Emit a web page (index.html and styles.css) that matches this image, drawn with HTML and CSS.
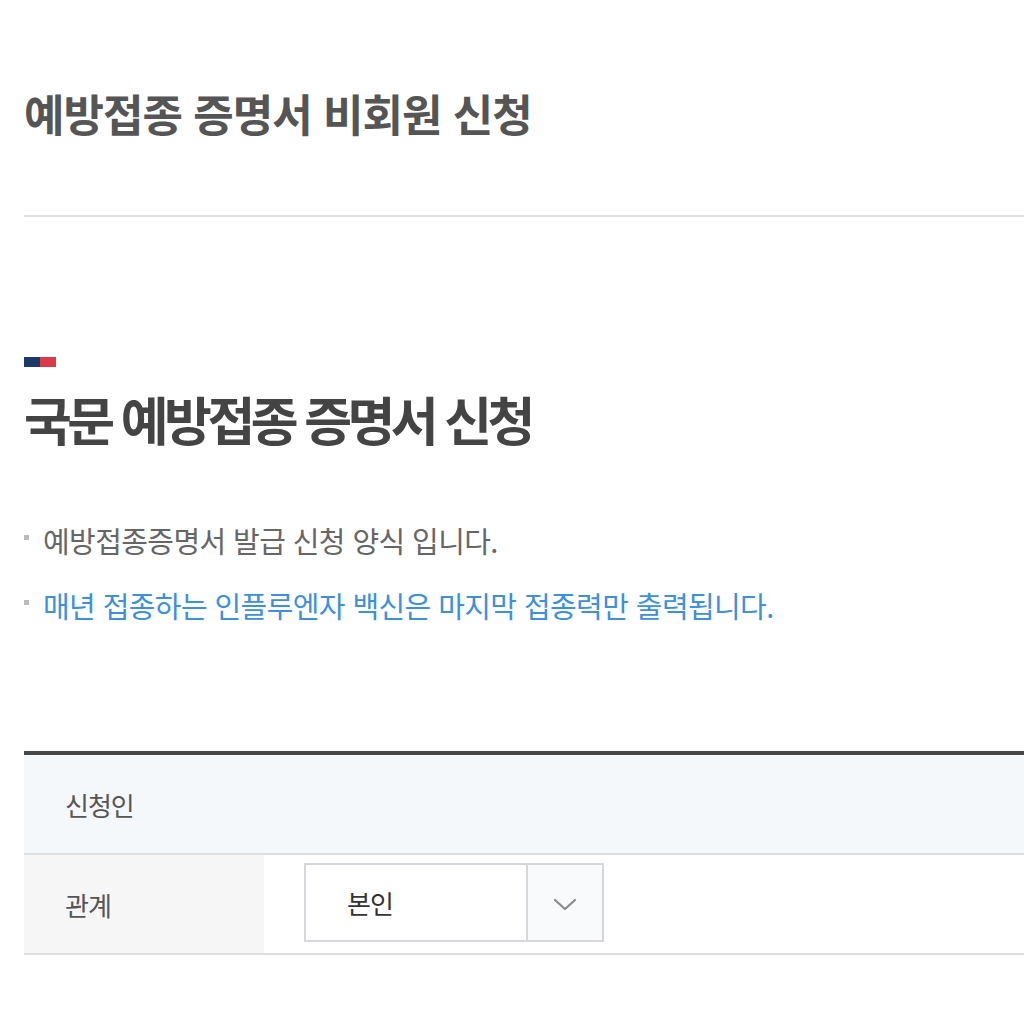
FILE: index.html
```html
<!DOCTYPE html>
<html lang="ko">
<head>
<meta charset="utf-8">
<title>예방접종 증명서 비회원 신청</title>
<link rel="stylesheet" href="styles.css">
</head>
<body>
<div class="page">
  <header class="page-head">
    <h1 class="page-title">예방접종 증명서 비회원 신청</h1>
  </header>
  <section class="section">
    <span class="marker"><span class="marker-blue"></span><span class="marker-red"></span></span>
    <h2 class="section-title">국문 예방접종 증명서 신청</h2>
    <ul class="notes">
      <li class="note">예방접종증명서 발급 신청 양식 입니다.</li>
      <li class="note note-blue">매년 접종하는 인플루엔자 백신은 마지막 접종력만 출력됩니다.</li>
    </ul>
    <div class="form-table">
      <div class="form-head">신청인</div>
      <div class="form-row">
        <div class="form-label">관계</div>
        <div class="form-value">
          <div class="select">
            <span class="select-text">본인</span>
            <span class="select-btn">
              <svg width="24" height="14" viewBox="0 0 24 14" aria-hidden="true"><path d="M2 2 L12 11 L22 2" fill="none" stroke="#8a8a8e" stroke-width="2.2" stroke-linecap="round" stroke-linejoin="round"/></svg>
            </span>
          </div>
        </div>
      </div>
    </div>
  </section>
</div>
</body>
</html>
```

FILE: styles.css
```css
html, body {
  margin: 0;
  padding: 0;
  background: #ffffff;
}
body {
  font-family: "Noto Sans CJK KR", "Noto Sans", sans-serif;
  color: #555;
  overflow: hidden;
}
.page {
  padding-left: 24px;
}
.page-head {
  padding-top: 83px;
  padding-bottom: 72px;
  border-bottom: 2px solid #dddddd;
}
.page-title {
  margin: 0;
  font-size: 44px;
  line-height: 60px;
  font-weight: 700;
  letter-spacing: -1px;
  color: #555555;
  white-space: nowrap;
}
.section {
  padding-top: 140px;
}
.marker {
  display: flex;
  width: 32px;
  height: 10px;
}
.marker-blue {
  flex: 1;
  background: #1b3a68;
}
.marker-red {
  flex: 1;
  background: #d83a48;
}
.section-title {
  margin: 20px 0 0;
  font-size: 52px;
  line-height: 64px;
  font-weight: 700;
  letter-spacing: -4.5px;
  color: #444444;
  white-space: nowrap;
}
.notes {
  list-style: none;
  margin: 69px 0 0;
  padding: 0;
}
.note {
  display: flex;
  align-items: center;
  gap: 14px;
  font-size: 29px;
  line-height: 40px;
  letter-spacing: -0.6px;
  color: #666666;
  white-space: nowrap;
}
.note + .note {
  margin-top: 25px;
}
.note::before {
  content: "";
  width: 5px;
  height: 5px;
  background: #bbbbbb;
  flex: none;
  margin-top: -5px;
}
.note-blue {
  color: #3d90dc;
}
.form-table {
  margin-top: 126px;
  border-top: 4px solid #484848;
}
.form-head {
  height: 98px;
  display: flex;
  align-items: center;
  padding-left: 41px;
  background: #f5f8fb;
  border-bottom: 2px solid #dedede;
  font-size: 26px;
  letter-spacing: -1px;
  color: #555555;
}
.form-row {
  display: flex;
  height: 98px;
  border-bottom: 2px solid #dedede;
}
.form-label {
  width: 199px;
  padding-left: 41px;
  display: flex;
  align-items: center;
  background: #f6f6f6;
  font-size: 26px;
  letter-spacing: -1px;
  color: #555555;
}
.form-value {
  flex: 1;
  display: flex;
  align-items: center;
  padding-left: 40px;
  padding-bottom: 3px;
}
.select {
  display: flex;
  width: 296px;
  height: 75px;
  border: 2px solid #d6d6dc;
}
.select-text {
  flex: 1;
  display: flex;
  align-items: center;
  padding-left: 41px;
  font-size: 26px;
  letter-spacing: -1px;
  color: #333333;
}
.select-btn {
  width: 74px;
  border-left: 2px solid #d6d6dc;
  background: #f9fafc;
  display: flex;
  align-items: center;
  justify-content: center;
  padding-top: 4px;
}
```
